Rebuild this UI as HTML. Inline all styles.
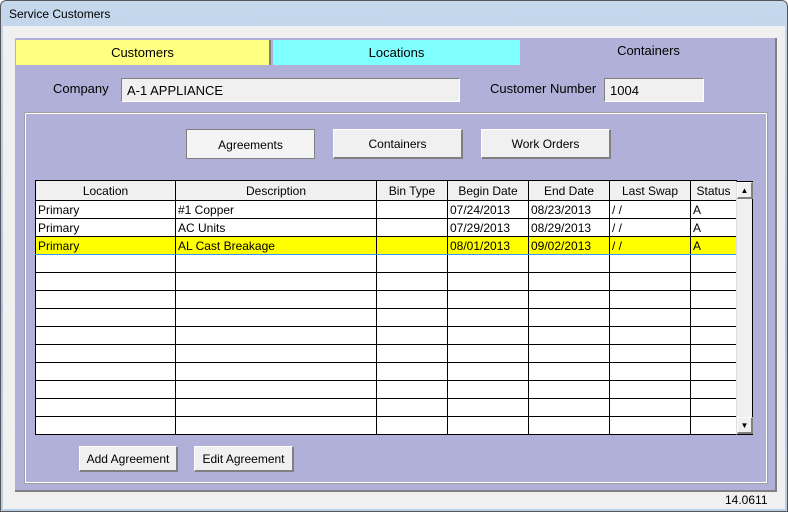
<!DOCTYPE html>
<html><head><style>
*{margin:0;padding:0;box-sizing:border-box}
body{width:788px;height:512px;overflow:hidden;font-family:"Liberation Sans",sans-serif;font-size:12px;color:#000;background:#fff}
.win{position:absolute;left:0;top:0;width:788px;height:512px;border-radius:6px 6px 0 0;background:linear-gradient(#c5d8ec,#a9c4e2 60%,#b9d1ea);overflow:hidden}
.frame{position:absolute;left:0;top:0;width:788px;height:512px;border:1px solid #555;border-radius:6px 6px 0 0;pointer-events:none}
.title{position:absolute;left:9px;top:7px;font-size:12px}
.client{position:absolute;left:3px;top:26px;width:782px;height:483px;background:#f0f0f0}
.a{position:absolute}
.tabpanel{left:15px;top:38px;width:762px;height:454px;background:#b0b0d8;border-right:2px solid #808080;border-bottom:2px solid #808080}
.tab{top:40px;height:25px;text-align:center;line-height:25px;font-size:13px}
.tb{background:#f0f0f0;border-top:1px solid #808080;border-left:1px solid #808080;border-bottom:1px solid #fff;border-right:1px solid #fff;padding:4px 5px;font-size:13px}
.grp{left:25px;top:113px;width:742px;height:370px;border:1px solid #fff;outline:1px solid #a0a0a0}
.btn{background:#f0f0f0;border:1px solid #fff;border-right:2px solid #808080;border-bottom:2px solid #808080;text-align:center;font-size:12px}
table{border-collapse:collapse;position:absolute;left:35px;top:180px;table-layout:fixed;background:#fff}
td{border:1px solid #000;height:18px;padding:0 2px;font-size:12px;white-space:nowrap;overflow:hidden}
tr.h td{text-align:center;background:#f0f0f0;height:20px}
tr.sel td{background:#ffff00;border-top:1px solid #3399ff;border-bottom:1px solid #3399ff}
</style></head><body>
<div class="win">
<div class="title">Service Customers</div>
<div class="client"></div>
<div class="a tabpanel"></div>
<div class="a tab" style="left:16px;width:255px;background:#ffff80;border-right:2px solid #808080">Customers</div>
<div class="a tab" style="left:273px;width:247px;background:#80ffff">Locations</div>
<div class="a tab" style="left:520px;width:257px;top:38px;line-height:25px">Containers</div>
<div class="a" style="left:53px;top:81px;font-size:13px">Company</div>
<div class="a tb" style="left:121px;top:78px;width:339px;height:24px">A-1 APPLIANCE</div>
<div class="a" style="left:490px;top:81px;font-size:13px">Customer Number</div>
<div class="a tb" style="left:604px;top:78px;width:100px;height:24px">1004</div>
<div class="a grp"></div>
<div class="a btn" style="left:186px;top:129px;width:129px;height:30px;line-height:30px;border:1px solid #808080;background:#f4f4f4">Agreements</div>
<div class="a btn" style="left:333px;top:129px;width:130px;height:30px;line-height:28px">Containers</div>
<div class="a btn" style="left:481px;top:129px;width:130px;height:30px;line-height:28px">Work Orders</div>
<table>
<colgroup><col style="width:140px"><col style="width:201px"><col style="width:71px"><col style="width:81px"><col style="width:81px"><col style="width:81px"><col style="width:46px"></colgroup>
<tr class="h"><td>Location</td><td>Description</td><td>Bin Type</td><td>Begin Date</td><td>End Date</td><td>Last Swap</td><td>Status</td></tr>
<tr><td>Primary</td><td>#1 Copper</td><td></td><td>07/24/2013</td><td>08/23/2013</td><td>/ /</td><td>A</td></tr>
<tr><td>Primary</td><td>AC Units</td><td></td><td>07/29/2013</td><td>08/29/2013</td><td>/ /</td><td>A</td></tr>
<tr class="sel"><td>Primary</td><td>AL Cast Breakage</td><td></td><td>08/01/2013</td><td>09/02/2013</td><td>/ /</td><td>A</td></tr>
<tr><td></td><td></td><td></td><td></td><td></td><td></td><td></td></tr>
<tr><td></td><td></td><td></td><td></td><td></td><td></td><td></td></tr>
<tr><td></td><td></td><td></td><td></td><td></td><td></td><td></td></tr>
<tr><td></td><td></td><td></td><td></td><td></td><td></td><td></td></tr>
<tr><td></td><td></td><td></td><td></td><td></td><td></td><td></td></tr>
<tr><td></td><td></td><td></td><td></td><td></td><td></td><td></td></tr>
<tr><td></td><td></td><td></td><td></td><td></td><td></td><td></td></tr>
<tr><td></td><td></td><td></td><td></td><td></td><td></td><td></td></tr>
<tr><td></td><td></td><td></td><td></td><td></td><td></td><td></td></tr>
<tr><td></td><td></td><td></td><td></td><td></td><td></td><td></td></tr>
</table>
<div class="a" style="left:736px;top:181px;width:17px;height:254px;background:#f0f0f0;border-left:1px solid #ddd;border-right:1px solid #000;border-bottom:1px solid #000;border-top:1px solid #000"></div>
<div class="a btn" style="left:737px;top:182px;width:16px;height:17px;font-size:8px;line-height:15px">&#9650;</div>
<div class="a btn" style="left:737px;top:417px;width:16px;height:17px;font-size:8px;line-height:15px">&#9660;</div>
<div class="a btn" style="left:79px;top:446px;width:99px;height:26px;line-height:24px">Add Agreement</div>
<div class="a btn" style="left:194px;top:446px;width:100px;height:26px;line-height:24px">Edit Agreement</div>
<div class="a" style="left:725px;top:493px;font-size:12px">14.0611</div>
<div class="frame"></div>
</div>
</body></html>
